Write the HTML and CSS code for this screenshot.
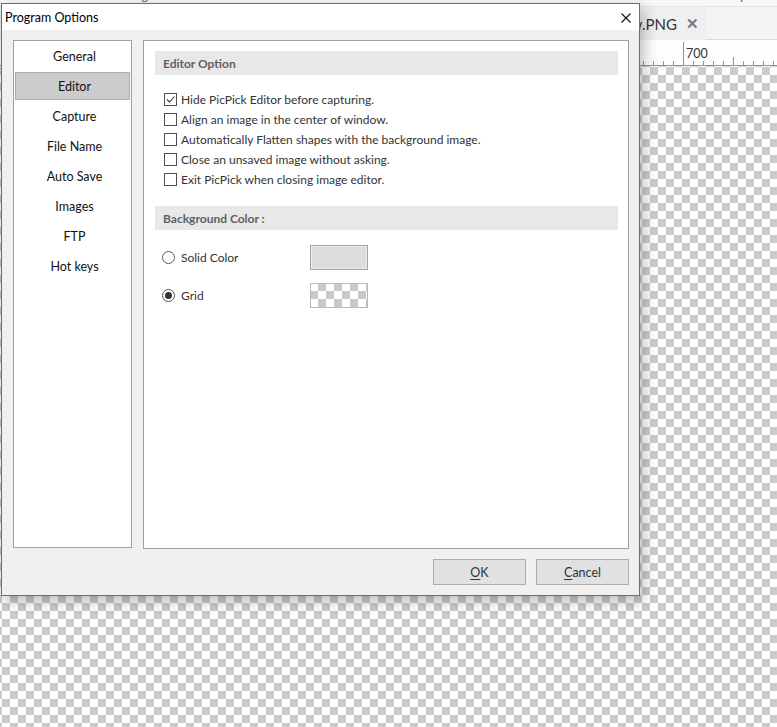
FILE: index.html
```html
<!DOCTYPE html>
<html>
<head>
<meta charset="utf-8">
<link rel="stylesheet" href="styles.css">
</head>
<body>
<div class="app">
  <div class="topstrip">
    <span class="frag f1">board</span>
    <span class="frag f2">Image</span>
    <span class="frag f3">Tools</span>
    <span class="frag f4">Help</span>
  </div>
  <div class="tabbar">
    <div class="tab"><span class="tabname">Overview.PNG</span><span class="tabx">✕</span></div>
  </div>
  <div class="ruler">
    <svg class="ticks" width="777" height="26" viewBox="0 0 777 26">
      <g stroke="#8795a3" stroke-width="1">
        <line x1="0" y1="25.5" x2="777" y2="25.5"/>
        <line x1="643.5" y1="21" x2="643.5" y2="25"/>
        <line x1="653.5" y1="21" x2="653.5" y2="25"/>
        <line x1="663.5" y1="21" x2="663.5" y2="25"/>
        <line x1="673.5" y1="21" x2="673.5" y2="25"/>
        <line x1="683.5" y1="2" x2="683.5" y2="25"/>
        <line x1="693.5" y1="21" x2="693.5" y2="25"/>
        <line x1="703.5" y1="21" x2="703.5" y2="25"/>
        <line x1="713.5" y1="21" x2="713.5" y2="25"/>
        <line x1="723.5" y1="21" x2="723.5" y2="25"/>
        <line x1="733.5" y1="17" x2="733.5" y2="25"/>
        <line x1="743.5" y1="21" x2="743.5" y2="25"/>
        <line x1="753.5" y1="21" x2="753.5" y2="25"/>
        <line x1="763.5" y1="21" x2="763.5" y2="25"/>
        <line x1="773.5" y1="21" x2="773.5" y2="25"/>
      </g>
    </svg>
    <span class="rulerlabel">700</span>
  </div>
  <div class="canvas"></div>
</div>

<div class="dialog">
  <div class="titlebar">
    <span class="title">Program Options</span>
    <svg class="close" width="10" height="10" viewBox="0 0 10 10">
      <path d="M0.5 0.5 L9.5 9.5 M9.5 0.5 L0.5 9.5" stroke="#111" stroke-width="1.1" fill="none"/>
    </svg>
  </div>
  <div class="dlgbody">
    <div class="main">
      <div class="sidebar">
        <div class="navitem">General</div>
        <div class="navitem active">Editor</div>
        <div class="navitem">Capture</div>
        <div class="navitem">File Name</div>
        <div class="navitem">Auto Save</div>
        <div class="navitem">Images</div>
        <div class="navitem">FTP</div>
        <div class="navitem">Hot keys</div>
      </div>
      <div class="panel">
        <div class="section-head">Editor Option</div>
        <div class="checks">
          <div class="row"><span class="cb"><svg width="11" height="11" viewBox="0 0 11 11"><path d="M2 5.5 L4.5 8 L9.5 2.5" stroke="#333" stroke-width="1.1" fill="none"/></svg></span>Hide PicPick Editor before capturing.</div>
          <div class="row"><span class="cb"></span>Align an image in the center of window.</div>
          <div class="row"><span class="cb"></span>Automatically Flatten shapes with the background image.</div>
          <div class="row"><span class="cb"></span>Close an unsaved image without asking.</div>
          <div class="row"><span class="cb"></span>Exit PicPick when closing image editor.</div>
        </div>
        <div class="section-head second">Background Color :</div>
        <div class="bgopts">
          <div class="bgrow">
            <div class="radiolabel"><span class="radio"></span>Solid Color</div>
            <div class="swatch solid"></div>
          </div>
          <div class="bgrow">
            <div class="radiolabel"><span class="radio on"></span>Grid</div>
            <div class="swatch grid"></div>
          </div>
        </div>
      </div>
    </div>
    <div class="footer">
      <div class="btn"><u>O</u>K</div>
      <div class="btn"><u>C</u>ancel</div>
    </div>
  </div>
</div>
</body>
</html>
```

FILE: styles.css
```css
* { box-sizing: border-box; }
html, body { margin: 0; padding: 0; }
body {
  width: 777px;
  height: 727px;
  overflow: hidden;
  font-family: "Lato", "Noto Sans", sans-serif;
  font-size: 12px;
  color: #222;
  position: relative;
}

.app {
  display: flex;
  flex-direction: column;
  height: 727px;
}

.topstrip {
  height: 7px;
  background: #f7f7f7;
  overflow: hidden;
  display: flex;
  align-items: flex-start;
  border-bottom: 1px solid #e6e6e6;
}
.frag {
  font-size: 12px;
  line-height: 14px;
  margin-top: -11px;
  color: #555;
}
.f1 { margin-left: 0; }
.f2 { margin-left: 92px; }
.f3 { margin-left: 291px; }
.f4 { margin-left: 250px; }

.tabbar {
  height: 33px;
  background: #f4f4f4;
  display: flex;
  border-bottom: 1px solid #dadada;
}
.tab {
  width: 706px;
  height: 33px;
  background: #efefef;
  display: flex;
  justify-content: flex-end;
  align-items: center;
  padding-right: 7px;
  gap: 9px;
  margin-bottom: -1px;
}
.tabname {
  font-size: 15px;
  color: #333;
  padding-top: 1px;
}
.tabx {
  font-size: 15px;
  font-weight: bold;
  color: #7a7a7a;
}

.ruler {
  height: 26px;
  background: #fdfdfd;
  position: relative;
}
.ticks { display: block; }
.rulerlabel {
  position: absolute;
  left: 686px;
  top: 6px;
  font-size: 12.5px;
  color: #333;
}

.canvas {
  flex: 1;
  background-color: #fff;
  background-image: repeating-conic-gradient(#cccccc 0 25%, #ffffff 0 50%);
  background-size: 16px 16px;
  background-position: 2px 1px;
}

/* dialog */
.dialog {
  position: absolute;
  left: 1px;
  top: 3px;
  width: 639px;
  height: 593px;
  border: 1px solid #6e6e6e;
  background: #f0f0f0;
  box-shadow: 3px 5px 14px rgba(0, 0, 0, 0.28);
  display: flex;
  flex-direction: column;
}
.titlebar {
  height: 26px;
  background: #fff;
  display: flex;
  align-items: center;
  justify-content: space-between;
  padding: 0 8px 0 3px;
}
.title {
  font-size: 12.5px;
  color: #000;
  padding-top: 1px;
}
.close { display: block; margin-top: 2px; }

.dlgbody {
  flex: 1;
  display: flex;
  flex-direction: column;
  padding: 10px 10px 0 11px;
}
.main {
  display: flex;
  align-items: flex-start;
  gap: 11px;
}
.sidebar {
  width: 119px;
  height: 508px;
  background: #fff;
  border: 1px solid #a0a0a0;
  padding: 1px;
  display: flex;
  flex-direction: column;
  gap: 2px;
}
.navitem {
  height: 28px;
  display: flex;
  align-items: center;
  justify-content: center;
  padding-left: 4px;
  color: #111;
  font-size: 12.5px;
  border: 1px solid transparent;
}
.navitem.active {
  background: #cccccc;
  border-color: #adadad;
}

.panel {
  width: 486px;
  height: 509px;
  background: #fff;
  border: 1px solid #a0a0a0;
  padding: 10px 10px 0 11px;
}
.section-head {
  height: 24px;
  background: #e8e8e8;
  display: flex;
  align-items: center;
  padding-left: 8px;
  font-weight: bold;
  color: #606060;
  font-size: 12px;
}
.section-head.second { margin-top: 17px; }

.checks {
  margin-top: 14px;
  padding-left: 9px;
  display: flex;
  flex-direction: column;
}
.row {
  height: 20px;
  display: flex;
  align-items: center;
  color: #333;
  font-size: 12px;
}
.cb {
  width: 13px;
  height: 13px;
  border: 1px solid #4f4f4f;
  background: #fff;
  margin-right: 4px;
  display: flex;
  align-items: center;
  justify-content: center;
}
.cb svg { display: block; }

.bgopts {
  margin-top: 15px;
  display: flex;
  flex-direction: column;
  gap: 13px;
}
.bgrow {
  display: flex;
  align-items: center;
  height: 25px;
}
.radiolabel {
  width: 155px;
  padding-left: 7px;
  display: flex;
  align-items: center;
  color: #333;
  font-size: 12px;
}
.radio {
  width: 13px;
  height: 13px;
  border-radius: 50%;
  border: 1px solid #555;
  background: #fff;
  margin-right: 6px;
  display: flex;
  align-items: center;
  justify-content: center;
}
.radio.on::after {
  content: "";
  width: 7px;
  height: 7px;
  border-radius: 50%;
  background: #333;
}
.swatch {
  width: 58px;
  height: 25px;
  border: 1px solid #a3a3a3;
}
.swatch.solid {
  background: #dcdcdc;
  box-shadow: inset 0 0 0 1px #ececec;
}
.swatch.grid {
  border-color: #b8b8b8;
  background-color: #fff;
  background-image: repeating-conic-gradient(#c9c9c9 0 25%, #ffffff 0 50%);
  background-size: 16px 16px;
  background-position: -1px -1px;
}

.footer {
  display: flex;
  justify-content: flex-end;
  gap: 10px;
  margin-top: 10px;
}
.btn {
  width: 93px;
  height: 26px;
  background: #e1e1e1;
  border: 1px solid #adadad;
  display: flex;
  align-items: center;
  justify-content: center;
  color: #333;
  font-size: 12.5px;
}
.btn u { text-underline-offset: 2px; }
```
